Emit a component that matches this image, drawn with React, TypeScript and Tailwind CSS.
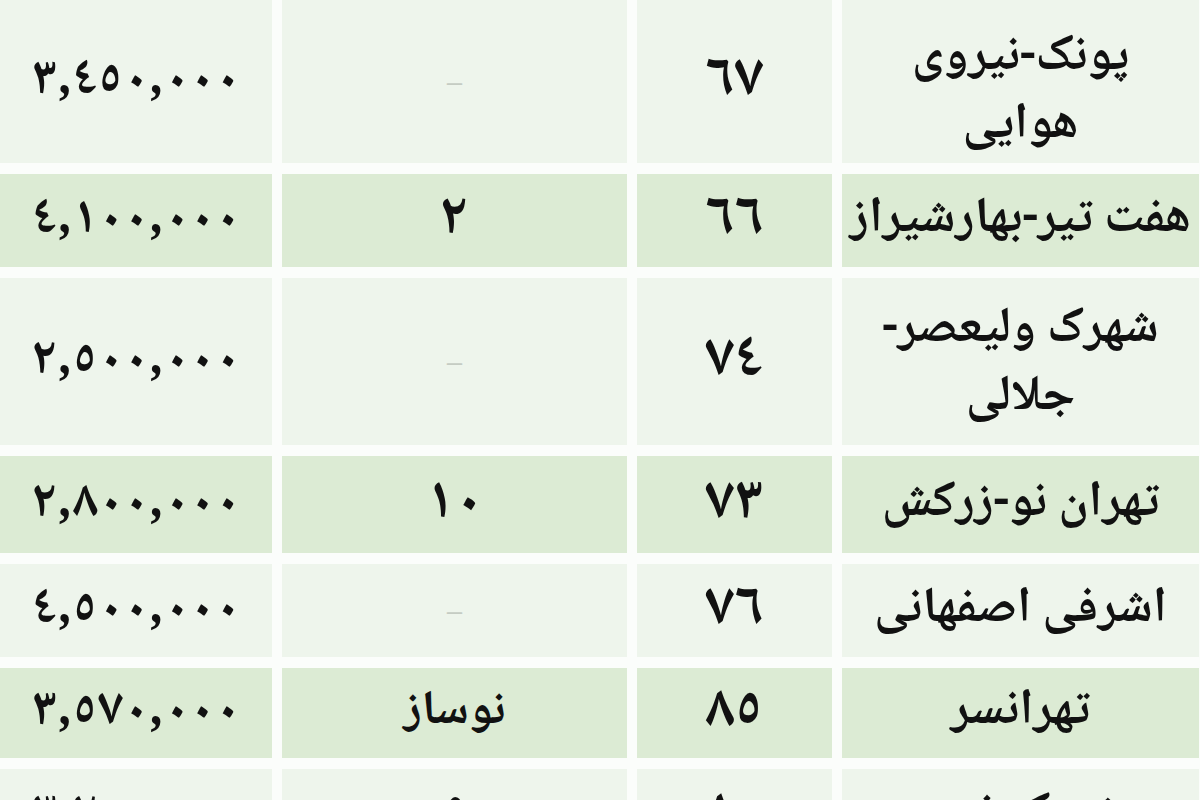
import React from "react";

type Row = {
  name: React.ReactNode;
  area: string;
  age: string;
  price: string;
  green: boolean;
  h: string;
  pad?: string;
};

const rows: Row[] = [
  { name: <>پونک-نیروی<br />هوایی</>, area: "٦٧", age: "–", price: "٣,٤٥٠,٠٠٠", green: false, h: "h-[163px]", pad: "pt-[22px]" },
  { name: "هفت تیر-بهارشیراز", area: "٦٦", age: "٢", price: "٤,١٠٠,٠٠٠", green: true, h: "h-[93px]" },
  { name: <>شهرک ولیعصر-<br />جلالی</>, area: "٧٤", age: "–", price: "٢,٥٠٠,٠٠٠", green: false, h: "h-[167px]", pad: "pt-[6px]" },
  { name: "تهران نو-زرکش", area: "٧٣", age: "١٠", price: "٢,٨٠٠,٠٠٠", green: true, h: "h-[97px]" },
  { name: "اشرفی اصفهانی", area: "٧٦", age: "–", price: "٤,٥٠٠,٠٠٠", green: false, h: "h-[93px]" },
  { name: "تهرانسر", area: "٨٥", age: "نوساز", price: "٣,٥٧٠,٠٠٠", green: true, h: "h-[90px]" },
  { name: "شهرک غرب", area: "٨٠", age: "٥", price: "٣,٢٠٠,٠٠٠", green: false, h: "h-[93px]" },
];

const font = "font-['Noto_Naskh_Arabic','DejaVu_Sans',sans-serif]";

export default function App() {
  return (
    <div className="w-[1200px] h-[800px] overflow-hidden bg-[#fbfdfb]">
      <div className="flex flex-col gap-[11px]">
        {rows.map((r, i) => {
          const bg = r.green ? "bg-[#dcebd4]" : "bg-[#eef5ec]";
          return (
            <div key={i} className={`flex gap-[10px] ${r.h}`}>
              <div className={`w-[272px] ${bg} flex items-center justify-center`}>
                <span dir="rtl" className={`${font} text-[52px] leading-none font-bold tracking-[-2px] text-[#111]`}>{r.price}</span>
              </div>
              <div className={`w-[345px] ${bg} flex items-center justify-center`}>
                {r.age === "–" ? (
                  <span className={`${font} text-[30px] leading-none pt-[8px] text-[#c5ccc3]`}>–</span>
                ) : r.age === "نوساز" ? (
                  <span dir="rtl" className={`${font} text-[48px] leading-none font-bold text-[#111]`}>{r.age}</span>
                ) : (
                  <span dir="rtl" className={`${font} text-[58px] leading-none font-bold text-[#111]`}>{r.age}</span>
                )}
              </div>
              <div className={`w-[195px] ${bg} flex items-center justify-center`}>
                <span dir="rtl" className={`${font} text-[60px] leading-none font-bold text-[#111]`}>{r.area}</span>
              </div>
              <div className={`w-[357px] ${bg} flex items-center justify-center ${r.pad ?? ""}`}>
                <span dir="rtl" className={`${font} text-[50px] font-bold leading-[68px] text-center whitespace-nowrap text-[#111]`}>{r.name}</span>
              </div>
            </div>
          );
        })}
      </div>
    </div>
  );
}
